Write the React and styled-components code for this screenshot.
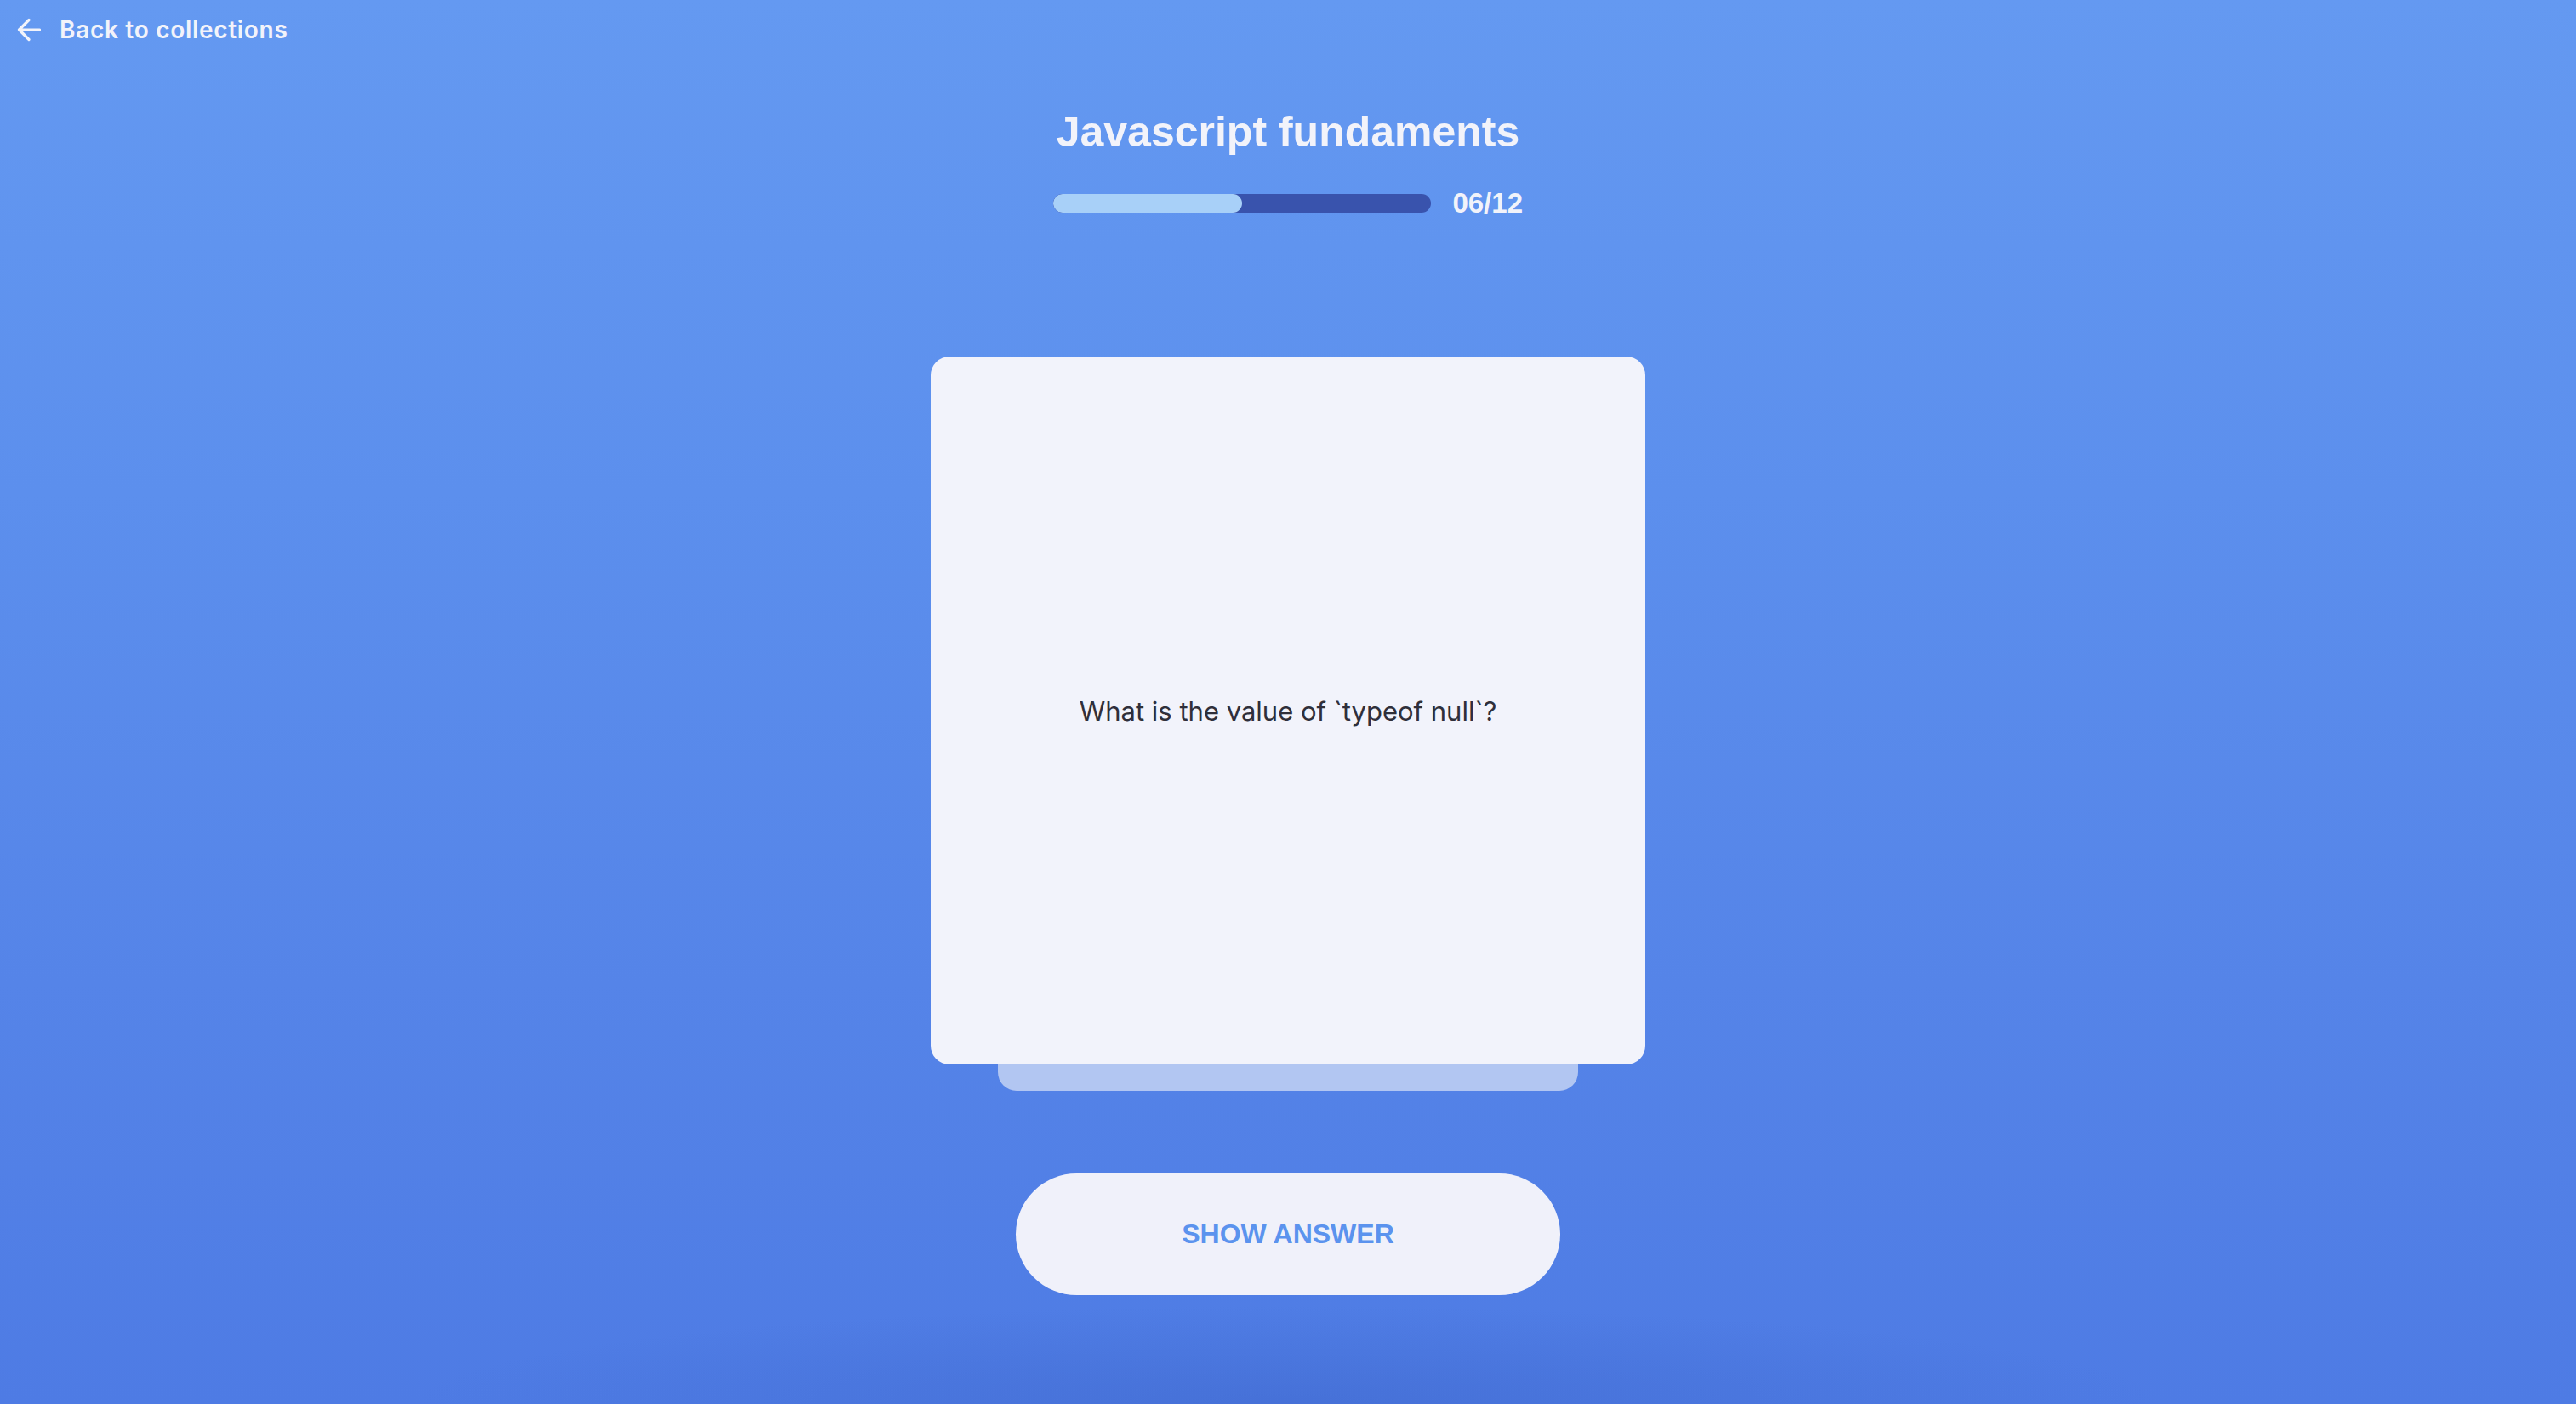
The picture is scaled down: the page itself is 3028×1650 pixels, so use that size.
import React, { useState } from "react";
import styled, { createGlobalStyle } from "styled-components";

const GlobalStyle = createGlobalStyle`
  html, body {
    margin: 0;
    padding: 0;
  }
  body {
    font-family: "Inter", "Liberation Sans", sans-serif;
    -webkit-font-smoothing: antialiased;
  }
`;

const card = {
  collection: "Javascript fundaments",
  index: 6,
  total: 12,
  question: "What is the value of `typeof null`?"
};

function ArrowLeft() {
  return (
    <svg width="28" height="28" viewBox="0 0 28 28" fill="none">
      <path
        d="M14 2.5 2.5 14 14 25.5M2.5 14h24"
        stroke="#f2f3fa"
        strokeWidth="3.2"
        strokeLinecap="round"
        strokeLinejoin="round"
      />
    </svg>
  );
}

export default function App() {
  const [showAnswer, setShowAnswer] = useState(false);
  const pad = (n) => String(n).padStart(2, "0");
  const progress = (card.index / card.total) * 100;

  return (
    <Page>
      <GlobalStyle />
      <Header>
        <BackLink href="#">
          <ArrowLeft />
          Back to collections
        </BackLink>
      </Header>
      <Main>
        <Title>{card.collection}</Title>
        <ProgressRow>
          <Track>
            <Fill style={{ width: `${progress}%` }} />
          </Track>
          <Counter>
            {pad(card.index)}/{pad(card.total)}
          </Counter>
        </ProgressRow>
        <Deck>
          <Card>
            <Question>{showAnswer ? "\"object\"" : card.question}</Question>
          </Card>
          <CardBehind />
        </Deck>
        <AnswerButton onClick={() => setShowAnswer(!showAnswer)}>
          {showAnswer ? "Hide answer" : "Show answer"}
        </AnswerButton>
      </Main>
    </Page>
  );
}

const Page = styled.div`
  min-height: 100vh;
  box-sizing: border-box;
  display: flex;
  flex-direction: column;
  background:
    radial-gradient(ellipse 34% 7% at 50% 100%, rgba(60, 100, 200, 0.45), rgba(60, 100, 200, 0)),
    linear-gradient(180deg, #6499f1 0%, #5c8fed 35%, #5584e8 70%, #4e7be4 100%);
`;

const Header = styled.header`
  height: 70px;
  display: flex;
  align-items: center;
  padding-left: 20px;
`;

const BackLink = styled.a`
  display: flex;
  align-items: center;
  gap: 22px;
  color: #f2f3fa;
  text-decoration: none;
  font-family: "Inter", sans-serif;
  font-weight: 600;
  font-size: 28px;
  letter-spacing: 0.7px;
`;

const Main = styled.main`
  display: flex;
  flex-direction: column;
  align-items: center;
`;

const Title = styled.h1`
  margin: 55px 0 0;
  font-family: "Liberation Sans", Arial, sans-serif;
  font-weight: 700;
  font-size: 50px;
  line-height: 60px;
  color: #f2f3fa;
`;

const ProgressRow = styled.div`
  margin-top: 34px;
  height: 40px;
  width: 552px;
  display: flex;
  align-items: center;
  gap: 25px;
`;

const Track = styled.div`
  flex: 1;
  height: 22px;
  border-radius: 11px;
  background: #3953ad;
  overflow: hidden;
`;

const Fill = styled.div`
  height: 100%;
  border-radius: 11px;
  background: #a8d0f8;
`;

const Counter = styled.span`
  font-family: "Liberation Sans", Arial, sans-serif;
  font-weight: 700;
  font-size: 33px;
  color: #f2f3fa;
`;

const Deck = styled.div`
  margin-top: 160px;
  display: flex;
  flex-direction: column;
  align-items: center;
`;

const Card = styled.div`
  width: 840px;
  height: 832px;
  border-radius: 22px;
  background: #f2f3fb;
  display: flex;
  align-items: center;
  justify-content: center;
`;

const CardBehind = styled.div`
  width: 682px;
  height: 31px;
  border-radius: 0 0 22px 22px;
  background: #b2c6f2;
`;

const Question = styled.p`
  margin: 0;
  font-family: "Inter", sans-serif;
  font-size: 31px;
  color: #2f2f3a;
`;

const AnswerButton = styled.button`
  margin-top: 97px;
  width: 640px;
  height: 143px;
  border: 0;
  border-radius: 72px;
  background: #f0f1fa;
  color: #5b93ee;
  font-family: "Liberation Sans", Arial, sans-serif;
  font-weight: 700;
  font-size: 32px;
  text-transform: uppercase;
  cursor: pointer;
`;
